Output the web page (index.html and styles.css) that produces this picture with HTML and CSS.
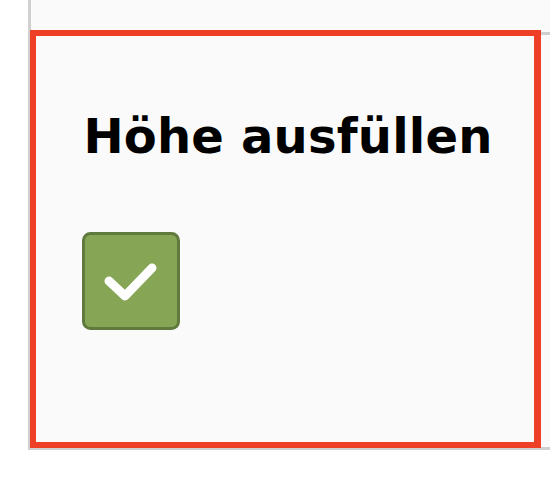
FILE: index.html
```html
<!DOCTYPE html>
<html lang="de">
<head>
<meta charset="utf-8">
<title>Höhe ausfüllen</title>
<link rel="stylesheet" href="styles.css">
</head>
<body>
<div class="panel">
  <div class="row">
    <div class="card">
      <h1 class="title">Höhe ausfüllen</h1>
      <div class="check">
        <svg viewBox="0 0 98 98" width="98" height="98" aria-hidden="true">
          <rect x="1.5" y="1.5" width="95" height="95" rx="7" ry="7" fill="#86a656" stroke="#5f7a3c" stroke-width="3"/>
          <path d="M27 49 L43 64 L70 36" fill="none" stroke="#ffffff" stroke-width="9" stroke-linecap="round" stroke-linejoin="round"/>
        </svg>
      </div>
    </div>
  </div>
</div>
</body>
</html>
```
FILE: styles.css
```css
html, body {
  margin: 0;
  padding: 0;
  background: #ffffff;
}
body {
  font-family: "DejaVu Sans", Verdana, sans-serif;
  width: 550px;
  height: 477px;
  overflow: hidden;
}
.panel {
  margin-left: 28px;
  width: 522px;
  height: 450px;
  border-left: 3px solid #d0d0d0;
  border-bottom: 3px solid #d0d0d0;
  background: #fafafa;
  box-sizing: border-box;
  padding-top: 32px;
}
.row {
  border-top: 3px solid #d0d0d0;
  height: 411px;
  display: flex;
}
.card {
  margin: -5px 0 -2px -1px;
  width: 511px;
  height: 418px;
  flex: none;
  box-sizing: border-box;
  border: 6px solid #ee4027;
  border-right-width: 7px;
  background: #fafafa;
  padding: 0 0 0 46px;
}
.title {
  margin: 72px 0 0 0;
  font-size: 48px;
  font-weight: bold;
  line-height: 56px;
  letter-spacing: 0.2px;
  color: #000;
  text-align: center;
  padding-right: 40px;
  white-space: nowrap;
}
.check {
  margin-top: 68px;
  width: 98px;
  height: 98px;
}
.check svg {
  display: block;
}
```
